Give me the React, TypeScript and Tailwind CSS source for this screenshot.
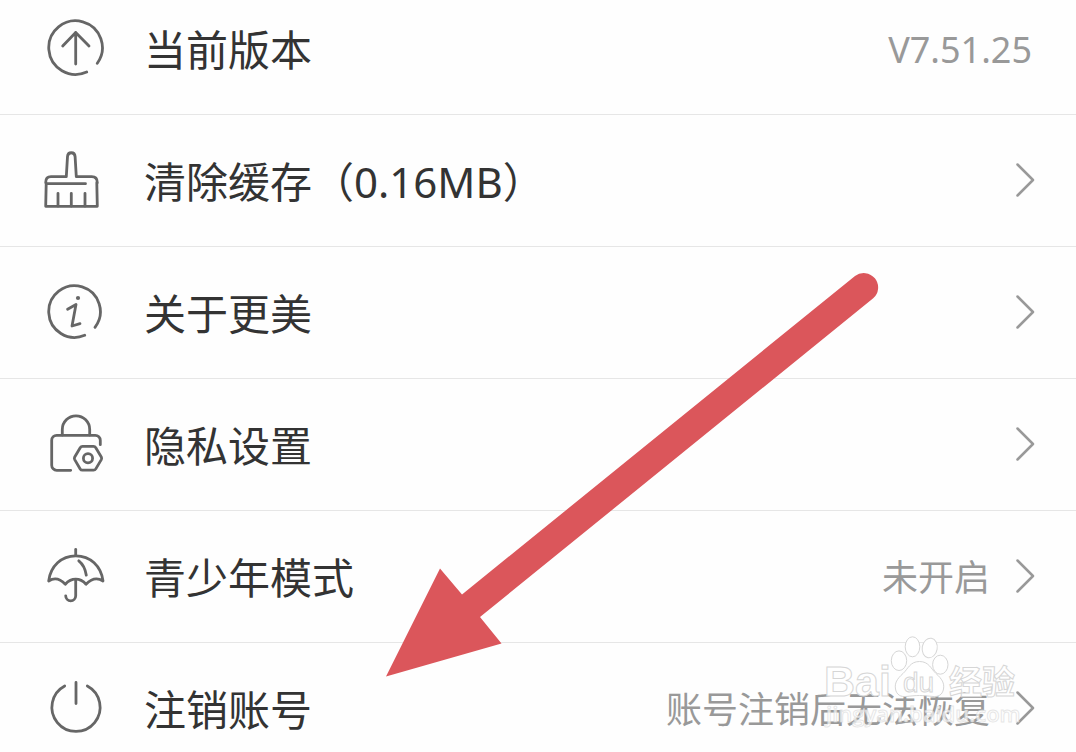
import React from 'react';
import type { ReactNode } from 'react';

interface SettingItem {
  id: string;
  label: string;
  icon: ReactNode;
  value?: string;
  link: boolean;
}

const Icon = ({ children }: { children: ReactNode }) => (
  <svg
    className="w-16 h-15 shrink-0 text-[#666666]"
    viewBox="0 0 64 60"
    fill="none"
    stroke="currentColor"
    strokeWidth="2.8"
    strokeLinecap="round"
    strokeLinejoin="round"
    aria-hidden="true"
  >
    {children}
  </svg>
);

const VersionIcon = () => (
  <Icon>
    <path d="M53.3 45.3A26.8 26.8 0 1 0 42.7 54" />
    <path d="M31.7 46V14.5M18.7 28L31.7 14.5L45 28" />
  </Icon>
);

const BroomIcon = () => (
  <Icon>
    <path d="M1.7 32.5C1.7 28.5 3.5 26.7 7 26.7H22.3L23.5 6.7C23.8 1.4 30.8 1.4 31.1 6.7L32.3 26.7H47.7C51.5 26.7 53.3 29 53.3 32.7" />
    <path d="M2.2 33.7L1.7 56.3H53.3L52.8 33" />
    <path d="M2.2 33.7H41.5M14 43.3V56M27.3 43.3V56M41 43.3V56" />
  </Icon>
);

const InfoIcon = () => (
  <Icon>
    <path d="M51 45.3A25.8 25.8 0 1 0 40.7 53.3" />
    <circle cx="34" cy="16" r="2.1" fill="currentColor" stroke="none" />
    <path d="M23.6 27.3L32 22.5L28 44L36 41.7" />
  </Icon>
);

const PrivacyIcon = () => (
  <Icon>
    <path d="M18.3 21V15.5A13.7 13.7 0 0 1 45.7 15.5V21" />
    <path d="M56.3 30.7V26.3A5 5 0 0 0 51.3 21.3H12.7A5 5 0 0 0 7.7 26.3V51.3A5 5 0 0 0 12.7 56.3H26.7" />
    <path d="M38.5 32.4H49.5Q51 32.4 51.8 33.7L57.3 43Q58 44.3 57.3 45.6L51.8 54.9Q51 56.2 49.5 56.2H38.5Q37 56.2 36.2 54.9L30.7 45.6Q30 44.3 30.7 43L36.2 33.7Q37 32.4 38.5 32.4Z" />
    <circle cx="44" cy="44.3" r="4.6" />
  </Icon>
);

const UmbrellaIcon = () => (
  <Icon>
    <path d="M31.7 3.5V9.7" />
    <path d="M4.7 35C6.5 20 17.5 9.9 31.8 9.9S57.2 20 59 35Q50.5 29.5 42 38.2Q37.5 33.2 31.7 33.2T21.3 38.2Q13 29.5 4.7 35Z" />
    <path d="M31.7 33.5V49.8A5 5 0 0 1 21.7 49.8M34.8 14.8Q40.8 19.5 42.3 29.2" />
  </Icon>
);

const PowerIcon = () => (
  <Icon>
    <path d="M20.7 8A24.1 24.1 0 1 0 43.3 8M32 4.5V25.5" />
  </Icon>
);

const Chevron = () => (
  <svg
    className="w-[22px] h-9 shrink-0"
    viewBox="0 0 22 36"
    fill="none"
    stroke="#999999"
    strokeWidth="2.5"
    strokeLinecap="round"
    strokeLinejoin="round"
    aria-hidden="true"
  >
    <path d="M3.5 2.5L19 18L3.5 33.5" />
  </svg>
);

const ITEMS: SettingItem[] = [
  { id: 'version', label: '当前版本', icon: <VersionIcon />, value: 'V7.51.25', link: false },
  { id: 'cache', label: '清除缓存（0.16MB）', icon: <BroomIcon />, link: true },
  { id: 'about', label: '关于更美', icon: <InfoIcon />, link: true },
  { id: 'privacy', label: '隐私设置', icon: <PrivacyIcon />, link: true },
  { id: 'teen', label: '青少年模式', icon: <UmbrellaIcon />, value: '未开启', link: true },
  { id: 'cancel', label: '注销账号', icon: <PowerIcon />, value: '账号注销后无法恢复', link: true },
];

const RowContent = ({ item }: { item: SettingItem }) => (
  <>
    {item.icon}
    <span className="ml-9 mt-1 text-[42px] leading-[56px] text-[#333333]">{item.label}</span>
    <span className="ml-auto flex items-center gap-6">
      {item.value && <span className="mt-1 text-[36px] leading-[56px] text-[#999999]">{item.value}</span>}
      {item.link && <Chevron />}
    </span>
  </>
);

// Red pointer drawn over the list
const Pointer = () => (
  <svg
    className="absolute left-[384px] top-[270px] w-[496px] h-[408px] pointer-events-none"
    viewBox="384 270 496 408"
    aria-hidden="true"
  >
    <path
      fill="#db565b"
      d="M386 676.5L440 568.5L462 594.5L855 276A14.4 14.4 0 0 1 873.2 298.3L480 617L501.5 643.5Z"
    />
  </svg>
);

const Watermark = () => (
  <svg
    className="absolute right-[54px] top-[634px] w-[200px] h-[100px] pointer-events-none"
    viewBox="0 0 200 100"
    fill="#ffffff"
    stroke="#d6d6d6"
    strokeWidth="1"
    aria-hidden="true"
  >
    <text x="2" y="62" fontSize="43" fontWeight="700" fontFamily="'Liberation Sans', sans-serif">Bai</text>
    <ellipse cx="77" cy="26.7" rx="7.7" ry="9.8" />
    <ellipse cx="90.5" cy="12.8" rx="7.3" ry="10" />
    <ellipse cx="107.7" cy="14" rx="7.5" ry="9.8" transform="rotate(10 107.7 14)" />
    <ellipse cx="118.3" cy="30.7" rx="7.7" ry="9.5" />
    <path d="M97.500 27.500C107 27.500 109 35 114 39.500C120 45 122.500 49 121.500 55C120.500 61 116 63 111 62.500C106 62 102 61.500 97.500 61.500S89 62 84 62.500C79 63 74.500 61 73.500 55C72.500 49 75 45 81 39.500C86 35 88 27.500 97.500 27.500Z" />
    <text x="81" y="58" fontSize="28" fontFamily="'Liberation Sans', sans-serif">du</text>
    <text x="127" y="60" fontSize="33" fontWeight="700" fontFamily="'Noto Sans CJK SC', sans-serif">经验</text>
    <text x="4" y="88" fontSize="22" fontWeight="600" fillOpacity="0.7" strokeOpacity="0.6" fontFamily="'Open Sans', sans-serif">jingyan.baidu.com</text>
  </svg>
);

const App: React.FC = () => {
  return (
    <main className="relative min-h-screen overflow-hidden bg-[#fefefe] font-['Noto_Sans','Noto_Sans_CJK_SC',sans-serif]">
      <ul>
        {ITEMS.map((item) => (
          <li key={item.id} className="border-b border-[#e6e6e6] last:border-b-0">
            {item.link ? (
              <button type="button" className="flex w-full items-center pl-11 pr-10 pt-[35px] pb-9 text-left">
                <RowContent item={item} />
              </button>
            ) : (
              <div className="flex items-center px-11 pt-[18px] pb-9">
                <RowContent item={item} />
              </div>
            )}
          </li>
        ))}
      </ul>
      <Pointer />
      <Watermark />
    </main>
  );
};

export default App;
